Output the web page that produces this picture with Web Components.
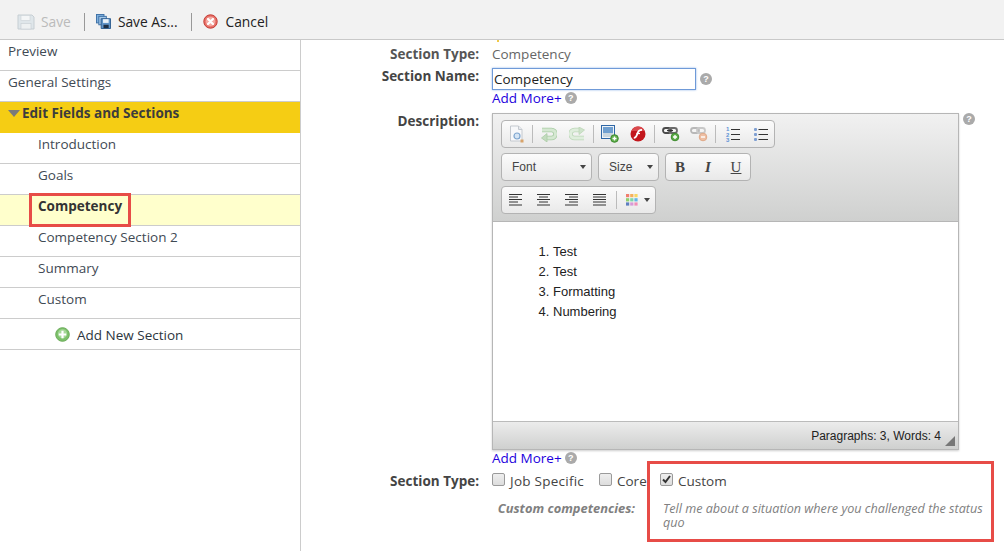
<!DOCTYPE html>
<html lang="en">
<head>
<meta charset="UTF-8">
<title>Edit Fields and Sections</title>
<style>
    html, body { margin: 0; height: 100%; overflow: hidden; background: #fff; }
    body { font: 13.5px/18px "Open Sans", "Noto Sans", sans-serif; color: #333; }
</style>
</head>
<body>
<form-app></form-app>

<script>
const ICONS = {
    save: `<svg width="18" height="16" viewBox="0 0 18 16"><path d="M1 1h14l2 2v12H1z" fill="#dfe6ea" stroke="#c6ced3"/><rect x="4" y="1.500" width="9" height="5" fill="#f4f6f7" stroke="#ccd3d7" stroke-width=".6"/><rect x="4" y="9.500" width="10" height="5.500" fill="#eef1f2" stroke="#c6ced3" stroke-width=".6"/></svg>`,
    saveas: `<svg width="15" height="15" viewBox="0 0 16 16"><rect x=".5" y=".5" width="8" height="9" fill="#7fb0de" stroke="#3c6fa5"/><rect x="3" y="2.500" width="8" height="9" fill="#a5c8e8" stroke="#3c6fa5"/><path d="M5.500 5h10v10.500h-10z" fill="#5f93c7" stroke="#2c5c8e"/><rect x="7.500" y="5.500" width="6" height="4" fill="#e9f1f8"/><rect x="8" y="11.500" width="5.500" height="3.500" fill="#1e2f44"/></svg>`,
    cancel: `<svg width="15" height="15" viewBox="0 0 15 15"><circle cx="7.500" cy="7.500" r="6.700" fill="#e8736b" stroke="#c43a33"/><circle cx="7.500" cy="7.500" r="4.700" fill="#f3a8a1"/><path d="M5 5l5 5M10 5l-5 5" stroke="#fff" stroke-width="2.200" stroke-linecap="round"/></svg>`,
    add: `<svg width="15" height="15" viewBox="0 0 15 15"><circle cx="7.500" cy="7.500" r="6.800" fill="#7cc06a" stroke="#6aab58"/><circle cx="7.500" cy="6.800" r="4.600" fill="#a5d898"/><path d="M7.500 3.800v7.400M3.800 7.500h7.400" stroke="#fff" stroke-width="2.200"/></svg>`,
    doc: `<svg width="15" height="18" viewBox="0 0 15 18"><path d="M1.500 1h8l3.500 3.500V16h-11.500z" fill="#f7f8fa" stroke="#c4c9cf"/><path d="M9.500 1v3.500h3.500" fill="#e6e9ed" stroke="#c4c9cf"/><circle cx="8" cy="11" r="3" fill="#d5e5f5" stroke="#7fa6cf" stroke-width="1.200"/><rect x="11.500" y="14.500" width="3" height="3" fill="#d8a36a"/></svg>`,
    undo: `<svg width="16" height="15" viewBox="0 0 16 15"><path d="M1 3h9.500a4 4 0 0 1 0 8H5" fill="none" stroke="#a9cca5" stroke-width="4.600"/><path d="M1 3h9.500a4 4 0 0 1 0 8H5" fill="none" stroke="#d5e8d2" stroke-width="3"/><path d="M6 6.500v8.500L.5 11z" fill="#c3dcbf" stroke="#a9cca5" stroke-width=".8"/></svg>`,
    redo: `<svg width="16" height="15" viewBox="0 0 16 15"><path d="M15 11H5.500a4 4 0 0 1 0-8H11" fill="none" stroke="#bcd7b8" stroke-width="4.600"/><path d="M15 11H5.500a4 4 0 0 1 0-8H11" fill="none" stroke="#dfeedd" stroke-width="3"/><path d="M10 0v7.500L15.500 3z" fill="#cfe3cc" stroke="#bcd7b8" stroke-width=".8"/></svg>`,
    image: `<svg width="18" height="18" viewBox="0 0 18 18"><rect x=".5" y=".5" width="13" height="13" fill="#eef3f8" stroke="#2f67a6"/><rect x="2" y="2" width="10" height="6" fill="#6f9fd0"/><rect x="2" y="8" width="10" height="4" fill="#c9d6df"/><circle cx="13.500" cy="13.500" r="3.800" fill="#5fae4b" stroke="#3d8a2e"/><path d="M13.500 11.500v4M11.500 13.500h4" stroke="#fff" stroke-width="1.400"/></svg>`,
    flash: `<svg width="16" height="16" viewBox="0 0 16 16"><circle cx="8" cy="8" r="7.500" fill="#c2161c"/><path d="M1.500 5a7 7 0 0 1 13 0z" fill="#d9484c"/><path d="M12 3.800c-3 0-4 1.500-4.600 3.700S6 11.800 3.800 11.800" fill="none" stroke="#fff" stroke-width="1.800"/><path d="M6.500 7.500h3.500" stroke="#fff" stroke-width="1.300"/></svg>`,
    link: `<svg width="18" height="16" viewBox="0 0 18 16"><rect x="1" y="2" width="8" height="5" rx="2.500" fill="none" stroke="#4a4a4a" stroke-width="1.800"/><rect x="7" y="2" width="8" height="5" rx="2.500" fill="none" stroke="#6a6a6a" stroke-width="1.800"/><path d="M5 4.500h6" stroke="#333" stroke-width="1.300"/><circle cx="13" cy="11" r="3.800" fill="#5fae4b" stroke="#3d8a2e"/><path d="M13 9v4M11 11h4" stroke="#fff" stroke-width="1.400"/></svg>`,
    unlink: `<svg width="18" height="16" viewBox="0 0 18 16"><rect x="1" y="2" width="8" height="5" rx="2.500" fill="none" stroke="#b8b8b8" stroke-width="1.800"/><rect x="7" y="2" width="8" height="5" rx="2.500" fill="none" stroke="#c8c8c8" stroke-width="1.800"/><circle cx="13" cy="11" r="3.800" fill="#eebfa4" stroke="#e0a988"/><path d="M11 11h4" stroke="#fff" stroke-width="1.400"/></svg>`,
    ol: `<svg width="15" height="16" viewBox="0 0 15 16"><path d="M6 3.500h9M6 8.500h9M6 13.500h9" stroke="#333"/><g fill="#5f93d6" font-family="Liberation Sans" font-weight="700" font-size="6"><text x="1" y="5">1</text><text x="1" y="10.500">2</text><text x="1" y="16">3</text></g></svg>`,
    ul: `<svg width="15" height="15" viewBox="0 0 15 15"><path d="M5.500 2.500H15M5.500 7.500H15M5.500 12.500H15" stroke="#333"/><rect x="1" y="1" width="3" height="3" rx="1" fill="#7f9fd2"/><rect x="1" y="6" width="3" height="3" rx="1" fill="#7f9fd2"/><rect x="1" y="11" width="3" height="3" rx="1" fill="#7f9fd2"/></svg>`,
    left: `<svg width="14" height="12" viewBox="0 0 14 12"><path d="M0 .5h13M0 3h9M0 5.500h13M0 8h9M0 11h13" stroke="#333"/></svg>`,
    center: `<svg width="14" height="12" viewBox="0 0 14 12"><path d="M0 .5h13M2 3h9M0 5.500h13M2 8h9M0 11h13" stroke="#333"/></svg>`,
    right: `<svg width="14" height="12" viewBox="0 0 14 12"><path d="M0 .5h13M4 3h9M0 5.500h13M4 8h9M0 11h13" stroke="#333"/></svg>`,
    justify: `<svg width="14" height="12" viewBox="0 0 14 12"><path d="M0 .5h13M0 3h13M0 5.500h13M0 8h13M0 11h13" stroke="#333"/></svg>`,
    colors: `<svg width="12" height="12" viewBox="0 0 12 12"><rect width="3.200" height="3.200" fill="#f07f6e"/><rect x="4.200" width="3.200" height="3.200" fill="#f6b05c"/><rect x="8.400" width="3.200" height="3.200" fill="#f7d765"/><rect y="4.200" width="3.200" height="3.200" fill="#8fd06f"/><rect x="4.200" y="4.200" width="3.200" height="3.200" fill="#7fd8a6"/><rect x="8.400" y="4.200" width="3.200" height="3.200" fill="#63b6e6"/><rect y="8.400" width="3.200" height="3.200" fill="#5f7fc0"/><rect x="4.200" y="8.400" width="3.200" height="3.200" fill="#d79ad8"/><rect x="8.400" y="8.400" width="3.200" height="3.200" fill="#f08fb8"/></svg>`
};

class HelpIcon extends HTMLElement {
    connectedCallback() {
        this.attachShadow({ mode: 'open' });
        this.shadowRoot.innerHTML = `
        <style>
            :host { display: inline-flex; align-items: center; justify-content: center; width: 12px; height: 12px;
                border-radius: 50%; background: #aaa; color: #fff; font: bold 9px/12px "Liberation Sans", sans-serif; }
        </style>?`;
    }
}

class ActionBar extends HTMLElement {
    connectedCallback() {
        this.attachShadow({ mode: 'open' });
        this.shadowRoot.innerHTML = `
        <style>
            :host { display: flex; align-items: center; height: 40px; box-sizing: border-box; padding: 4px 0 0 17px;
                background: #f2f2f2; border-bottom: 1px solid #c9c9c9; flex: none; color: #222; font-size: 13.8px; }
            span { display: flex; align-items: center; gap: 7px; }
            .off { color: #bbb; gap: 6px; }
            .cancel { gap: 8px; }
            i { width: 1px; height: 18px; background: #999; margin: 0 11px 0 13px; }
        </style>
        <span class="off">${ICONS.save}Save</span><i></i>
        <span>${ICONS.saveas}Save As...</span><i></i>
        <span class="cancel">${ICONS.cancel}Cancel</span>`;
    }
}

class NavItem extends HTMLElement {
    connectedCallback() {
        this.attachShadow({ mode: 'open' });
        this.shadowRoot.innerHTML = `
        <style>
            :host { display: flex; height: 31px; box-sizing: border-box; padding: 2px 0 0 8px; border-bottom: 1px solid #ccc; color: #3f4a54; }
            :host([sub]) { padding-left: 38px; }
            :host([selected]) { background: #ffffcc; font-weight: 700; color: #333; }
            :host([open]) { background: #f5cd14; font-weight: 700; color: #3c3c3c; border-bottom: 0; }
            .tri { width: 0; height: 0; border: 6px solid transparent; border-top: 7px solid #7a7a7a; border-bottom: 0; margin: 6px 2px 0 0; display: none; }
            :host([open]) .tri { display: block; }
        </style>
        <span class="tri"></span><slot></slot>`;
    }
}

class AddSection extends HTMLElement {
    connectedCallback() {
        this.attachShadow({ mode: 'open' });
        this.shadowRoot.innerHTML = `
        <style>
            :host { display: flex; align-items: center; gap: 7px; height: 31px; box-sizing: border-box; padding: 1px 0 0 55px; border-bottom: 1px solid #ccc; color: #2d3640; }
        </style>
        ${ICONS.add}<slot></slot>`;
    }
}

class SideNav extends HTMLElement {
    connectedCallback() {
        this.attachShadow({ mode: 'open' });
        this.shadowRoot.innerHTML = `
        <style>
            :host { display: block; width: 300px; flex: none; border-right: 1px solid #ccc; position: relative; }
            .mark { position: absolute; left: 29px; top: 153px; width: 102px; height: 34px; box-sizing: border-box; border: 3px solid #e74c47; }
        </style>
        <slot></slot><div class="mark"></div>`;
    }
}

class FormRow extends HTMLElement {
    connectedCallback() {
        this.attachShadow({ mode: 'open' });
        this.shadowRoot.innerHTML = `
        <style>
            :host { display: grid; grid-template-columns: 178px 1fr; column-gap: 13px; }
            .label { text-align: right; font-weight: 700; color: #555; white-space: nowrap; }
            :host([strong]) .label { color: #444; }
            :host([lifted]) .label { margin-top: -1px; }
            :host([note]) { grid-template-columns: 334px 1fr; column-gap: 28px; }
            :host([note]) .label { font-style: italic; font-size: 12.9px; line-height: 14px; color: #808080; }
        </style>
        <div class="label"><slot name="label"></slot></div>
        <div class="value"><slot></slot></div>`;
    }
}

class AddMore extends HTMLElement {
    connectedCallback() {
        this.attachShadow({ mode: 'open' });
        this.shadowRoot.innerHTML = `
        <style>
            :host { display: flex; align-items: center; gap: 3px; color: #2200dd; height: 18px; }
        </style>
        Add More+ <help-icon></help-icon>`;
    }
}

class ToolGroup extends HTMLElement {
    connectedCallback() {
        this.attachShadow({ mode: 'open' });
        this.shadowRoot.innerHTML = `
        <style>
            :host { display: flex; align-items: center; height: 28px; box-sizing: border-box; border: 1px solid #b3b3b3; border-radius: 4px;
                background: linear-gradient(#fbfbfb, #e9e9e9); flex: none; }
        </style>
        <slot></slot>`;
    }
}

class ToolIcon extends HTMLElement {
    connectedCallback() {
        this.attachShadow({ mode: 'open' });
        let name = this.getAttribute('name');
        this.shadowRoot.innerHTML = `
        <style>
            :host { display: flex; align-items: center; justify-content: center; width: 28px; height: 26px; flex: none;
                font: 700 15px "Liberation Serif", serif; color: #444; }
            :host([sep]) { width: 1px; height: 18px; background: #bbb; margin: 0 2px; }
        </style>
        ${ICONS[name] || ''}<slot></slot>`;
    }
}

class ToolSelect extends HTMLElement {
    connectedCallback() {
        this.attachShadow({ mode: 'open' });
        this.shadowRoot.innerHTML = `
        <style>
            :host { display: flex; align-items: center; height: 28px; box-sizing: border-box; border: 1px solid #b3b3b3; border-radius: 4px;
                background: linear-gradient(#fbfbfb, #e9e9e9); padding: 0 5px 0 10px; font: 12px "Liberation Sans", sans-serif; color: #444; flex: none; }
            span { flex: 1; }
            i { border: 3px solid transparent; border-top: 4px solid #444; border-bottom: 0; }
        </style>
        <span><slot></slot></span><i></i>`;
    }
}

class RichEditor extends HTMLElement {
    connectedCallback() {
        this.attachShadow({ mode: 'open' });
        this.shadowRoot.innerHTML = `
        <style>
            :host { display: block; width: 467px; box-sizing: border-box; border: 1px solid #b6b6b6; box-shadow: 0 1px 2px rgba(0,0,0,.2);
                font: 12px/20px "Liberation Sans", sans-serif; color: #222; }
            .bar { background: linear-gradient(#f1f1f1, #cfd0cf); border-bottom: 1px solid #b6b6b6; height: 108px; box-sizing: border-box;
                padding: 6px 8px; display: flex; flex-direction: column; gap: 5px; }
            .line { display: flex; gap: 6px; }
            .body { height: 199px; box-sizing: border-box; padding: 20px 0 0 20px; font-size: 13px; background: #fff; }
            ol { margin: 0; padding-left: 40px; }
            .foot { height: 28px; background: linear-gradient(#ececec, #cfd0cf); border-top: 1px solid #bbb; position: relative;
                box-sizing: border-box; text-align: right; padding: 4px 17px 0 0; }
            .grip { position: absolute; right: 3px; bottom: 3px; width: 0; height: 0; border: 5px solid transparent; border-right-color: #777; border-bottom-color: #777; }
        </style>
        <div class="bar">
            <div class="line"><tool-group>
                <tool-icon name="doc"></tool-icon><tool-icon sep></tool-icon>
                <tool-icon name="undo"></tool-icon><tool-icon name="redo"></tool-icon><tool-icon sep></tool-icon>
                <tool-icon name="image"></tool-icon><tool-icon name="flash"></tool-icon><tool-icon sep></tool-icon>
                <tool-icon name="link"></tool-icon><tool-icon name="unlink"></tool-icon><tool-icon sep></tool-icon>
                <tool-icon name="ol"></tool-icon><tool-icon name="ul"></tool-icon>
            </tool-group></div>
            <div class="line">
                <tool-select style="width:91px">Font</tool-select>
                <tool-select style="width:61px">Size</tool-select>
                <tool-group>
                    <tool-icon>B</tool-icon><tool-icon style="font-style:italic">I</tool-icon><tool-icon style="text-decoration:underline;font-weight:400">U</tool-icon>
                </tool-group>
            </div>
            <div class="line"><tool-group>
                <tool-icon name="left"></tool-icon><tool-icon name="center"></tool-icon><tool-icon name="right"></tool-icon><tool-icon name="justify"></tool-icon><tool-icon sep></tool-icon>
                <tool-icon name="colors" style="width:25px"></tool-icon>
                <i style="border:3px solid transparent;border-top:4px solid #444;border-bottom:0;margin:0 5px 0 0"></i>
            </tool-group></div>
        </div>
        <div class="body"><ol><li>Test</li><li>Test</li><li>Formatting</li><li>Numbering</li></ol></div>
        <div class="foot">Paragraphs: 3, Words: 4<span class="grip"></span></div>`;
    }
}

class CheckItem extends HTMLElement {
    connectedCallback() {
        this.attachShadow({ mode: 'open' });
        this.shadowRoot.innerHTML = `
        <style>
            :host { display: inline-flex; align-items: center; gap: 5px; color: #444; white-space: nowrap; }
            i { width: 11px; height: 11px; border: 1px solid #9a9a9a; border-radius: 2px; background: linear-gradient(#eee, #ddd); margin-top: -3px; display: flex; }
            svg { display: none; }
            :host([checked]) svg { display: block; }
        </style>
        <i><svg width="11" height="11" viewBox="0 0 11 11"><path d="M2 5.500l2.500 2.500L9 2" fill="none" stroke="#333" stroke-width="2"/></svg></i><slot></slot>`;
    }
}

class FormApp extends HTMLElement {
    connectedCallback() {
        this.attachShadow({ mode: 'open' });
        this.shadowRoot.innerHTML = `
        <style>
            :host { display: flex; flex-direction: column; height: 100vh; overflow: hidden; }
            .columns { display: flex; flex: 1; min-height: 0; }
            main { flex: 1; padding-top: 5px; position: relative; min-width: 0; color: #666; }
            .name-value { display: flex; align-items: center; gap: 4px; }
            input { width: 204px; height: 22px; box-sizing: border-box; border: 1px solid #6f9ad8; box-shadow: 0 0 2px #8fb4e8; padding: 0 1px;
                font: inherit; color: #222; outline: 0; margin: 0; }
            .editor-value { display: flex; align-items: flex-start; gap: 4px; }
            .checks { display: grid; grid-template-columns: 107px 61px auto; }
            .note { font-style: italic; font-size: 12.6px; line-height: 14px; color: #808080; width: 325px; padding-top: 1px; }
            .speck { position: absolute; left: 196px; top: 0; width: 2px; height: 2px; background: #f0c94a; }
            .mark { position: absolute; left: 346px; top: 421px; width: 347px; height: 81px; box-sizing: border-box; border: 3px solid #e74c47; }
        </style>
        <action-bar></action-bar>
        <div class="columns">
            <side-nav>
                <nav-item>Preview</nav-item>
                <nav-item>General Settings</nav-item>
                <nav-item open>Edit Fields and Sections</nav-item>
                <nav-item sub>Introduction</nav-item>
                <nav-item sub>Goals</nav-item>
                <nav-item sub selected>Competency</nav-item>
                <nav-item sub>Competency Section 2</nav-item>
                <nav-item sub>Summary</nav-item>
                <nav-item sub>Custom</nav-item>
                <add-section>Add New Section</add-section>
            </side-nav>
            <main>
                <div class="speck"></div>
                <form-row><span slot="label">Section Type:</span>Competency</form-row>
                <form-row strong lifted style="margin-top:5px"><span slot="label">Section Name:</span>
                    <div class="name-value"><input value="Competency"><help-icon></help-icon></div>
                </form-row>
                <form-row style="margin-top:-1px"><add-more></add-more></form-row>
                <form-row strong lifted style="margin-top:6px"><span slot="label">Description:</span>
                    <div class="editor-value"><rich-editor></rich-editor><help-icon></help-icon></div>
                </form-row>
                <form-row style="margin-top:-1px"><add-more></add-more></form-row>
                <form-row strong style="margin-top:5px"><span slot="label">Section Type:</span>
                    <div class="checks"><check-item style="letter-spacing:.25px">Job Specific</check-item><check-item>Core</check-item><check-item checked>Custom</check-item></div>
                </form-row>
                <form-row note style="margin-top:11px"><span slot="label">Custom competencies:</span>
                    <div class="note">Tell me about a situation where you challenged the status quo</div>
                </form-row>
                <div class="mark"></div>
            </main>
        </div>`;
    }
}

customElements.define('help-icon', HelpIcon);
customElements.define('action-bar', ActionBar);
customElements.define('nav-item', NavItem);
customElements.define('add-section', AddSection);
customElements.define('side-nav', SideNav);
customElements.define('form-row', FormRow);
customElements.define('add-more', AddMore);
customElements.define('tool-group', ToolGroup);
customElements.define('tool-icon', ToolIcon);
customElements.define('tool-select', ToolSelect);
customElements.define('rich-editor', RichEditor);
customElements.define('check-item', CheckItem);
customElements.define('form-app', FormApp);
</script>
</body>
</html>
